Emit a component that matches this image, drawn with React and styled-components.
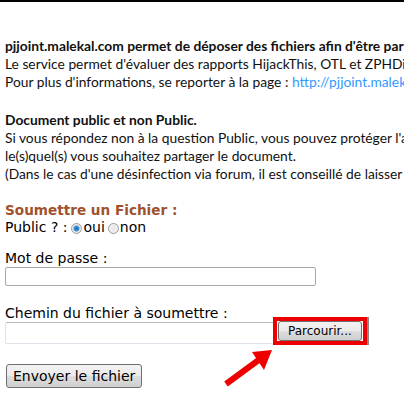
import React from 'react';
import styled, { createGlobalStyle } from 'styled-components';

const GlobalStyle = createGlobalStyle`
  html, body {
    margin: 0;
    padding: 0;
    background: #ffffff;
    overflow: hidden;
  }
  body {
    width: 404px;
    height: 408px;
  }
`;

const Page = styled.div`
  position: relative;
  width: 404px;
  height: 408px;
  border-top: 2px solid #000;
  box-sizing: border-box;
  overflow: hidden;
  white-space: nowrap;
`;

const Intro = styled.div`
  padding: 35px 0 0 5px;
  font-family: Lato, "Open Sans", sans-serif;
  font-size: 13.8px;
  line-height: 18px;
  color: #111;
`;

const Para = styled.p`
  margin: ${({ $top }) => $top || 0}px 0 0;
`;

const Strong = styled.span`
  font-weight: bold;
`;

const TextLink = styled.a`
  color: #3399ff;
  text-decoration: none;
`;

const Form = styled.div`
  padding: 19px 0 0 5px;
  font-family: "DejaVu Sans", Verdana, sans-serif;
  font-size: 14px;
  line-height: 17px;
  color: #000;
`;

const Title = styled.div`
  font-weight: bold;
  font-size: 13.6px;
  color: #a0522d;
`;

const RadioRow = styled.div`
  display: flex;
  align-items: center;
`;

const Radio = styled.span`
  display: inline-block;
  width: 9px;
  height: 9px;
  margin: 1px 1px 0 ${({ $first }) => ($first ? 4 : 3)}px;
  border-radius: 50%;
  border: 1px solid #9a9a9a;
  background: ${({ $checked }) =>
    $checked
      ? 'radial-gradient(circle, #1f6fb8 0, #3c8fd8 2.5px, #e8e8e8 3.5px, #f4f4f4 100%)'
      : 'radial-gradient(circle, #e6e6e6 0, #f6f6f6 100%)'};
`;

const Label = styled.div`
  margin-top: ${({ $top }) => $top}px;
`;

const TextInput = styled.div`
  width: 309px;
  height: 17px;
  border: 1px solid #a9a9a9;
  border-radius: 2px;
  background: #fff;
`;

const FileRow = styled.div`
  display: flex;
  align-items: flex-start;
  margin-top: -5px;
`;

const FileBox = styled.div`
  width: 267px;
  height: 20px;
  margin-top: 5px;
  border: 1px solid #dfe3ea;
  border-right: none;
  border-top-color: #b5b9c0;
  border-radius: 2px 0 0 2px;
  background: #fff;
`;

const Highlight = styled.div`
  display: flex;
  padding: 0 1px;
  border: 4px solid #ee0000;
  box-shadow: 2px 0 0 #8a8a8a;
  background: #fff;
`;

const Button = styled.button`
  height: ${({ $h }) => $h}px;
  padding: 0 ${({ $pad }) => $pad}px;
  border: 1px solid #707070;
  border-radius: 3px;
  background: linear-gradient(#f2f2f2 0%, #ebebeb 48%, #dddddd 52%, #cfcfcf 100%);
  font-family: "DejaVu Sans", Verdana, sans-serif;
  font-size: ${({ $size }) => $size}px;
  color: #000;
  line-height: 1;
  cursor: pointer;
`;

const SubmitWrap = styled.div`
  margin-top: 19px;
  padding-left: 1px;
`;

const Arrow = styled.svg`
  position: absolute;
  left: 222px;
  top: 343px;
`;

export default function App() {
  return (
    <>
      <GlobalStyle />
      <Page>
        <Intro>
          <Para>
            <Strong>pjjoint.malekal.com permet de déposer des fichiers afin d'être partagés.</Strong>
            <br />
            Le service permet d'évaluer des rapports HijackThis, OTL et ZPHDiag
            <br />
            Pour plus d'informations, se reporter à la page : <TextLink href="#">http://pjjoint.malekal.com</TextLink>
          </Para>
          <Para $top={20}>
            <Strong>Document public et non Public.</Strong>
            <br />
            Si vous répondez non à la question Public, vous pouvez protéger l'accès
            <br />
            le(s)quel(s) vous souhaitez partager le document.
            <br />
            (Dans le cas d'une désinfection via forum, il est conseillé de laisser le document public)
          </Para>
        </Intro>
        <Form>
          <Title>Soumettre un Fichier :</Title>
          <RadioRow>
            Public ? :<Radio $checked $first />oui<Radio />non
          </RadioRow>
          <Label $top={14}>Mot de passe :</Label>
          <TextInput />
          <Label $top={19}>Chemin du fichier à soumettre :</Label>
          <FileRow>
            <FileBox />
            <Highlight>
              <Button $h={20} $pad={9} $size={12}>Parcourir...</Button>
            </Highlight>
          </FileRow>
          <SubmitWrap>
            <Button $h={24} $pad={6} $size={14}>Envoyer le fichier</Button>
          </SubmitWrap>
        </Form>
        <Arrow width="54" height="44" viewBox="0 0 54 44">
          <line x1="4" y1="39" x2="38" y2="14" stroke="#ee0000" strokeWidth="6" />
          <polygon points="50,5 30,7 42,25" fill="#ee0000" />
        </Arrow>
      </Page>
    </>
  );
}
